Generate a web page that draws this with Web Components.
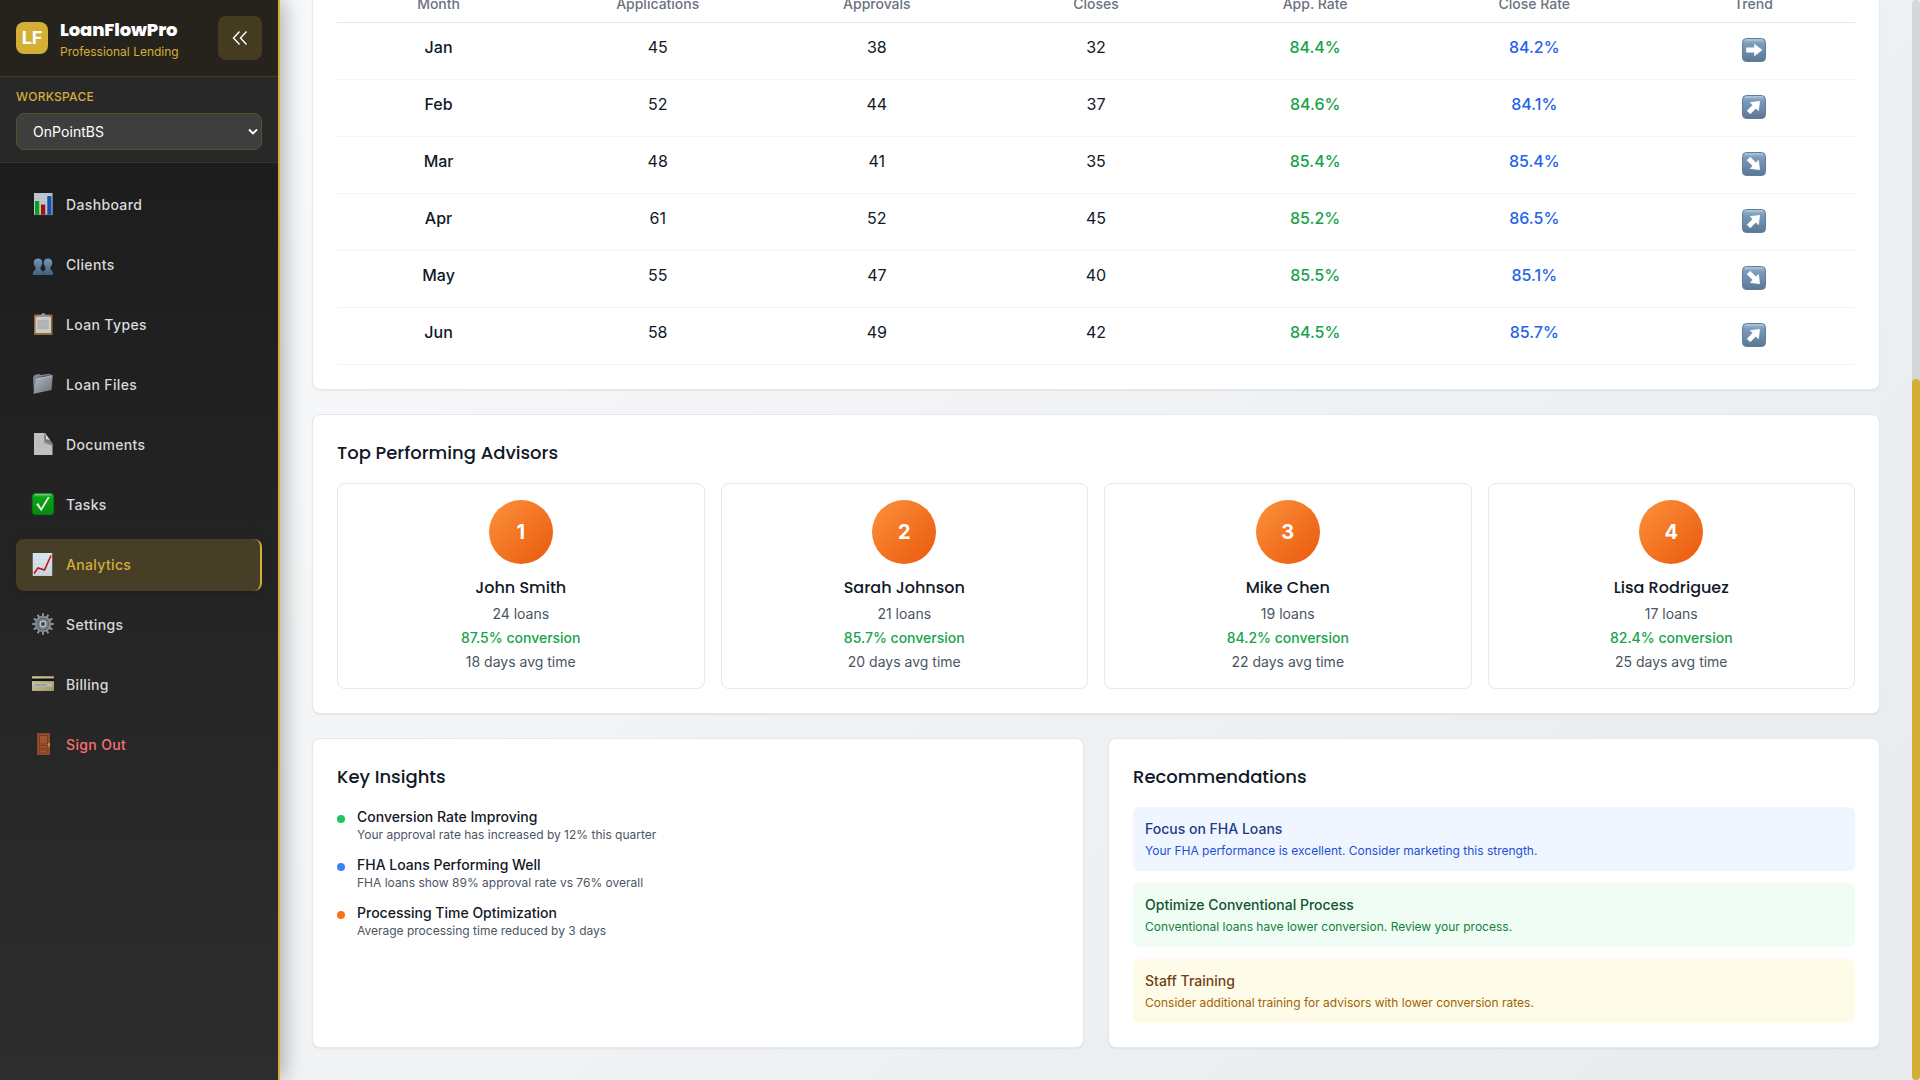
<!DOCTYPE html>
<html lang="en">
<head>
<meta charset="utf-8">
<title>LoanFlowPro</title>
<style>
html,body{margin:0;height:100%}
body{font-family:Inter,"Liberation Sans",sans-serif;font-size:16px;line-height:24px;color:#111827;overflow:hidden;--gold:#d4af37;--head:Poppins,Inter,sans-serif}
</style>
</head>
<body>
<app-shell>
  <side-bar slot="side">
    <nav-item icon="chart">Dashboard</nav-item>
    <nav-item icon="people">Clients</nav-item>
    <nav-item icon="clip">Loan Types</nav-item>
    <nav-item icon="folder">Loan Files</nav-item>
    <nav-item icon="doc">Documents</nav-item>
    <nav-item icon="check">Tasks</nav-item>
    <nav-item icon="line" active>Analytics</nav-item>
    <nav-item icon="gear">Settings</nav-item>
    <nav-item icon="card">Billing</nav-item>
    <nav-item icon="door" danger>Sign Out</nav-item>
  </side-bar>
  <panel-card><month-table></month-table></panel-card>
  <panel-card heading="Top Performing Advisors">
    <card-row gap="16">
      <advisor-card rank="1" name="John Smith" loans="24" rate="87.5" days="18"></advisor-card>
      <advisor-card rank="2" name="Sarah Johnson" loans="21" rate="85.7" days="20"></advisor-card>
      <advisor-card rank="3" name="Mike Chen" loans="19" rate="84.2" days="22"></advisor-card>
      <advisor-card rank="4" name="Lisa Rodriguez" loans="17" rate="82.4" days="25"></advisor-card>
    </card-row>
  </panel-card>
  <card-row gap="24">
    <panel-card heading="Key Insights">
      <insight-item color="#22c55e" heading="Conversion Rate Improving">Your approval rate has increased by 12% this quarter</insight-item>
      <insight-item color="#3b82f6" heading="FHA Loans Performing Well">FHA loans show 89% approval rate vs 76% overall</insight-item>
      <insight-item color="#f97316" heading="Processing Time Optimization">Average processing time reduced by 3 days</insight-item>
    </panel-card>
    <panel-card heading="Recommendations">
      <tip-box tone="blue" heading="Focus on FHA Loans">Your FHA performance is excellent. Consider marketing this strength.</tip-box>
      <tip-box tone="green" heading="Optimize Conventional Process">Conventional loans have lower conversion. Review your process.</tip-box>
      <tip-box tone="yellow" heading="Staff Training">Consider additional training for advisors with lower conversion rates.</tip-box>
    </panel-card>
  </card-row>
</app-shell>
<script>
const define=(name,render)=>customElements.define(name,class extends HTMLElement{
  connectedCallback(){ if(!this.shadowRoot) this.attachShadow({mode:'open'}).innerHTML='<style>*{box-sizing:border-box}:host{box-sizing:border-box;display:block}</style>'+render(this); }
});
const A=(e,n)=>e.getAttribute(n)||'';

const ICONS={
chart:'<rect x="2" y="0" width="18.5" height="22" fill="#b9c3cd"/><path d="M2 3.5h18.5M2 7h18.5M2 11h18.5" stroke="#cbd3da" stroke-width=".6"/><rect x="3" y="8" width="4.2" height="14" fill="#0ba018"/><rect x="9" y="11.5" width="4.2" height="10.5" fill="#a80d10"/><rect x="15.3" y="3" width="4.2" height="19" fill="#0f52ac"/><path d="M2 21.7h18.5" stroke="#777" stroke-width=".6"/>',
people:'<defs><linearGradient id="g" x1="0" y1="0" x2="0" y2="1"><stop stop-color="#7396b4"/><stop offset="1" stop-color="#3f6182"/></linearGradient></defs><g fill="url(#g)"><path d="M1.700 9.600C1.700 6.900 3.600 5.500 6 5.500s4.300 1.400 4.300 4.100c0 2-.9 3.600-1.700 4.500v2.200c0 1.100 2.200 1.300 2.400 2.700v3H.9v-2.400c0-1.800 2.600-2.100 2.600-3.300v-2.200C2.600 13.200 1.700 11.600 1.700 9.600z"/><path d="M20.300 9.600c0-2.700-1.900-4.100-4.300-4.100s-4.300 1.400-4.300 4.100c0 2 .9 3.600 1.700 4.500v2.200c0 1.100-2.200 1.300-2.200 2.700v3H21v-2.400c0-1.800-2.500-2.100-2.500-3.300v-2.200c.9-.9 1.800-2.500 1.800-4.500z"/></g>',
clip:'<rect x="2" y="1.500" width="18.500" height="20.500" rx=".8" fill="#8f6a38"/><rect x="3.500" y="3.500" width="15.500" height="16.500" fill="#c9c9c9"/><rect x="5.500" y="7" width="11" height="9" fill="#b0b0b0"/><path d="M6 9h10M6 11h10M6 13h10" stroke="#c2c2c2" stroke-width=".5"/><path d="M5.500 4V2.300h3.500L10 .3h2.500l1 2h3.500V4z" fill="#93999d"/>',
folder:'<defs><linearGradient id="g" x1="0" y1="0" x2="1" y2="1"><stop stop-color="#b4bbc2"/><stop offset="1" stop-color="#697078"/></linearGradient></defs><path d="M1 4.500L2.500 2l5-1 1 1L18 .7l1 1.500v14L2 20.500z" fill="#7e8b96"/><path d="M2.300 4.500L18 1.700v2z" fill="#4a5761"/><path d="M4.200 6l16.500-3.500L19.500 17 1.500 20.800z" fill="url(#g)"/><path d="M4.200 6l16.500-3.500" stroke="#c9d0d6" stroke-width=".6"/>',
doc:'<path d="M2 0h11l7.500 11v11H2z" fill="#c0c0c0"/><path d="M12 0l8.500 11-8-2z" fill="#747474"/><path d="M13 .3c1.200 2 1.200 4.300 1 6 2.300-.2 5 1 6.500 4.200z" fill="#dcdcdc"/><path d="M13 7.500l7.500 3.500V13c-2-.8-6-2-8.500-3z" fill="#8a8a8a"/><path d="M4 5h7M4 8h7M4 11h11M4 14h12M4 18h4" stroke="#b2b2b2" stroke-width=".7"/>',
check:'<defs><linearGradient id="g" x1="0" y1="0" x2="0" y2="1"><stop stop-color="#3fb94d"/><stop offset=".2" stop-color="#08a514"/><stop offset="1" stop-color="#038d10"/></linearGradient></defs><rect x=".3" y=".3" width="21.400" height="21.400" rx="3.500" fill="url(#g)" stroke="#0c7a17" stroke-width=".6"/><path d="M3 1.800h16" stroke="#84cf8a" stroke-width="1"/><path d="M4 11.200l2.300-1.100 2.800 4.900L15.700 3.900l2.200.2L9.300 18.300z" fill="#e4e9e4"/>',
line:'<defs><linearGradient id="g" x1="0" y1="0" x2="0" y2="1"><stop stop-color="#d5e4ee"/><stop offset="1" stop-color="#c7ced6"/></linearGradient></defs><rect x=".8" y="0" width="19.400" height="22.800" fill="url(#g)"/><path d="M1.300 0v22.500h19M5 0v22M9 0v22M13 0v22M17 0v22M1 5h19M1 9h19M1 13h19M1 17h19" stroke="#e6edf1" stroke-width=".4" fill="none"/><path d="M2 20.500l4-5.500 6.500 2L19 2.500" fill="none" stroke="#c3131a" stroke-width="1.600"/>',
gear:'<path d="M11 .3v21.400M.3 11h21.400M5.650 1.730l10.700 18.540M1.730 5.650l18.540 10.700M1.730 16.350l18.540-10.700M5.650 20.270l10.700-18.540" stroke="#8e949c" stroke-width="1.900"/><circle cx="11" cy="11" r="8.200" fill="#848a93"/><circle cx="11" cy="11" r="6.300" fill="#5e646d"/><circle cx="11" cy="11" r="5.300" fill="#767c85"/><circle cx="11" cy="11" r="3.400" fill="#c7cbd0"/><circle cx="11" cy="11" r="2.200" fill="#4a4e55"/>',
card:'<defs><linearGradient id="g" x1="0" y1="0" x2="1" y2="1"><stop stop-color="#d6d0a3"/><stop offset="1" stop-color="#9a946b"/></linearGradient></defs><rect y="3.200" width="22" height="14.800" rx=".8" fill="url(#g)"/><rect y="5.500" width="22" height="2.600" fill="#17140f"/><rect x="2" y="10.500" width="18" height="3" fill="#b9bcb4"/><path d="M3 12h12" stroke="#6675a0" stroke-width="1" stroke-dasharray="1.500 .5"/>',
door:'<rect x="5" width="13" height="22" fill="#8b4526"/><rect x="6.300" y="1.300" width="10.400" height="20" fill="#a2552f"/><g fill="none" stroke="#743619" stroke-width=".8"><rect x="7.500" y="2.500" width="8" height="8.500"/><rect x="7.500" y="12.800" width="8" height="2.500"/><rect x="7.500" y="17" width="8" height="3"/></g><rect x="16" y="10" width="2" height="3.500" fill="#b8912c"/>'
};

define('app-shell',()=>`<style>
:host{display:flex;height:1080px;overflow:hidden;background:linear-gradient(135deg,#f8f9fa 0%,#e7ebee 100%) right top/1640px 1080px no-repeat}
::slotted(side-bar){flex:none}
main{flex:1;min-width:0;height:1080px;padding:32px;display:flex;flex-direction:column;justify-content:flex-end;gap:24px;overflow:hidden}
main ::slotted(*){flex:none}
.bar{flex:none;width:8px;display:flex;flex-direction:column;justify-content:flex-end;background:rgba(0,0,0,.1);border-radius:4px}
.bar i{height:701px;background:var(--gold);border-radius:4px}
</style><slot name="side"></slot><main><slot></slot></main><div class="bar"><i></i></div>`);

define('side-bar',()=>`<style>
:host{width:280px;height:1080px;background:linear-gradient(180deg,#1a1a1a,#2d2d2d);border-right:2px solid var(--gold);box-shadow:4px 0 20px rgba(0,0,0,.3);z-index:1;position:relative}
header{display:flex;align-items:center;height:77px;padding:0 16px;border-bottom:1px solid #4a3c1a;background:#25231c}
.logo{width:32px;height:32px;border-radius:8px;background:var(--gold);color:#fff;font-weight:700;font-size:18px;line-height:32px;text-align:center}
.brand{flex:1;margin-left:12px;padding-top:5px}
.brand b{display:block;font:800 18px/22px var(--head);letter-spacing:-.13px;color:#fff;white-space:nowrap}
.brand span{display:block;font-size:12px;line-height:20px;color:var(--gold);margin-top:1px;white-space:nowrap}
button{width:44px;height:44px;border:0;border-radius:8px;background:#453c20;padding:0;display:flex;align-items:center;justify-content:center}
.ws{height:86px;padding:12px 16px;background:#282828;border-bottom:1px solid #3c351f}
.ws label{display:block;font-size:12px;line-height:16px;font-weight:500;color:var(--gold);margin-bottom:8px;letter-spacing:.25px}
.sel{height:37px;border:1px solid #57502f;border-radius:8px;background:#3e3e3e;display:flex;align-items:center;justify-content:space-between;padding:0 3px 0 16px;color:#fff;font-size:14px;letter-spacing:.05px}
nav{padding:16px;display:flex;flex-direction:column;gap:8px}
</style>
<header><div class="logo">LF</div><div class="brand"><b>LoanFlowPro</b><span>Professional Lending</span></div>
<button><svg width="16" height="16" viewBox="0 0 16 16" fill="none" stroke="#fff" stroke-width="1.400"><path d="M7.500 1.500L1.500 8l6 6.500M14.500 1.500L8.500 8l6 6.500"/></svg></button></header>
<div class="ws"><label>WORKSPACE</label><div class="sel"><span>OnPointBS</span><svg width="10" height="8" viewBox="0 0 10 8" fill="none" stroke="#fff" stroke-width="1.800"><path d="M1 1.500l4 4 4-4"/></svg></div></div>
<nav><slot></slot></nav>`);

define('nav-item',e=>`<style>
:host{display:flex;align-items:center;gap:12px;height:52px;padding:0 16px;border-radius:8px;color:#d9d9d9;font-size:14px;font-weight:500;line-height:20px;letter-spacing:.35px}
:host([active]){background:#463e27;color:var(--gold);border-right:2px solid var(--gold);box-shadow:0 4px 12px rgba(0,0,0,.15)}
:host([danger]){color:#f87171}
svg{flex:none;margin-top:-2px;overflow:visible}
</style><svg width="22" height="22" viewBox="0 0 22 22">${ICONS[A(e,'icon')]}</svg><span><slot></slot></span>`);

define('panel-card',e=>`<style>
:host{background:#fff;border:1px solid #e5e7eb;border-radius:8px;padding:24px;box-shadow:0 1px 2px rgba(0,0,0,.06)}
h3{margin:0 0 16px;font:500 18px/28px var(--head)}
div{display:flex;flex-direction:column;gap:12px}
</style>${A(e,'heading')?`<h3>${A(e,'heading')}</h3>`:''}<div><slot></slot></div>`);

define('card-row',e=>`<style>:host{display:flex;gap:${A(e,'gap')}px}::slotted(*){flex:1 1 0;min-width:0}</style><slot></slot>`);

const ROWS=[['Jan',45,38,32,'84.4%','84.2%',0],['Feb',52,44,37,'84.6%','84.1%',-45],['Mar',48,41,35,'85.4%','85.4%',45],['Apr',61,52,45,'85.2%','86.5%',-45],['May',55,47,40,'85.5%','85.1%',45],['Jun',58,49,42,'84.5%','85.7%',-45]];
define('trend-icon',e=>`<style>:host{width:24px;height:24px}svg{display:block}</style>
<svg width="24" height="24" viewBox="0 0 24 24"><defs><linearGradient id="g" x1="0" y1="0" x2="0" y2="1"><stop stop-color="#a5bfd6"/><stop offset=".22" stop-color="#7c9cbc"/><stop offset="1" stop-color="#5b7794"/></linearGradient></defs>
<rect x=".5" y=".5" width="23" height="23" rx="4" fill="url(#g)" stroke="#5f7d99"/><path d="M3 2h18" stroke="#b4c9db" stroke-width="1"/>
<path transform="rotate(${A(e,'turn')} 12 12)" d="M4.500 9.800h8V6.200L20 12l-7.500 5.800v-3.600h-8z" fill="#fff" stroke="#fff" stroke-width=".6" stroke-linejoin="round"/></svg>`);
define('month-table',()=>`<style>
.r{display:grid;grid-template-columns:repeat(7,1fr);gap:16px;text-align:center;height:57px;padding:12px 0;border-bottom:1px solid #f3f4f6}
.h{height:29px;padding:0;border-color:#e5e7eb;font-size:14px;line-height:20px;font-weight:500;color:#6b7280}
.m{font-weight:500}.g{color:#16a34a;font-weight:500}.b{color:#2563eb;font-weight:500}
trend-icon{margin:3px 89px 0 auto}
</style><div class="r h">${['Month','Applications','Approvals','Closes','App. Rate','Close Rate','Trend'].map(t=>`<span>${t}</span>`).join('')}</div>
${ROWS.map(r=>`<div class="r"><span class="m">${r[0]}</span><span>${r[1]}</span><span>${r[2]}</span><span>${r[3]}</span><span class="g">${r[4]}</span><span class="b">${r[5]}</span><trend-icon turn="${r[6]}"></trend-icon></div>`).join('')}`);

define('advisor-card',e=>`<style>
:host{border:1px solid #e5e7eb;border-radius:8px;padding:16px;display:flex;flex-direction:column;align-items:center;gap:4px;font-size:14px;line-height:20px;color:#4b5563}
.n{width:64px;height:64px;border-radius:50%;background:linear-gradient(135deg,#fb923c,#ea580c);color:#fff;font:700 20px/64px Inter,sans-serif;text-align:center;margin-bottom:8px}
h4{margin:0;font:500 16px/24px var(--head);color:#111827}
.c{color:#16a34a;font-weight:500}
</style><div class="n">${A(e,'rank')}</div><h4>${A(e,'name')}</h4><span>${A(e,'loans')} loans</span><span class="c">${A(e,'rate')}% conversion</span><span>${A(e,'days')} days avg time</span>`);

define('insight-item',e=>`<style>
:host{display:flex;gap:12px;font-size:12px;line-height:16px;color:#4b5563}
i{width:8px;height:8px;border-radius:50%;margin-top:8px;background:${A(e,'color')}}
b{display:block;font-weight:500;font-size:14px;line-height:20px;color:#111827}
</style><i></i><div><b>${A(e,'heading')}</b><slot></slot></div>`);

const TONES={blue:['#eff6ff','#1e3a8a','#1d4ed8'],green:['#f0fdf4','#14532d','#15803d'],yellow:['#fefce8','#713f12','#a16207']};
define('tip-box',e=>{const t=TONES[A(e,'tone')];return `<style>
:host{background:${t[0]};color:${t[2]};border-radius:6px;padding:12px;font-size:12px;line-height:16px}
b{display:block;font-weight:500;font-size:14px;line-height:20px;margin-bottom:4px;color:${t[1]}}
</style><b>${A(e,'heading')}</b><slot></slot>`});
</script>
</body>
</html>
